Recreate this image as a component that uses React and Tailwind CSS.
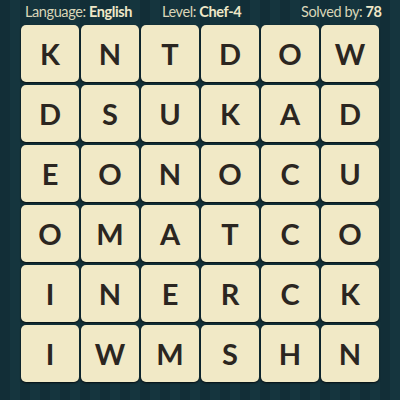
const rows = [
  "KNTDOW",
  "DSUKAD",
  "EONOCU",
  "OMATCO",
  "INERCK",
  "IWMSHN",
];

export default function App() {
  return (
    <div className="w-[400px] h-[400px] overflow-hidden bg-[#133039] bg-[repeating-linear-gradient(90deg,#122e37_0px,#122e37_10px,#15353e_10px,#15353e_20px)] font-['Lato','Open_Sans',sans-serif]">
      <div className="h-[25px] flex items-start pl-[25px] pt-[2px] text-[14.5px] leading-[20px] tracking-[-0.4px] text-[#d9d5b8]">
        <div className="w-[137px] shrink-0">
          Language: <span className="font-bold text-[#efe8c8]">English</span>
        </div>
        <div className="w-[139px] shrink-0">
          Level: <span className="font-bold text-[#efe8c8]">Chef-4</span>
        </div>
        <div className="shrink-0">
          Solved by: <span className="font-bold text-[#efe8c8]">78</span>
        </div>
      </div>
      <div className="ml-[21px] grid grid-cols-[repeat(6,58px)] auto-rows-[57px] gap-x-[2px] gap-y-[3px]">
        {rows.map((r, ri) =>
          r.split("").map((ch, ci) => (
            <div
              key={ri + "-" + ci}
              className="rounded-[5px] bg-[#f1e9c6] shadow-[0_1px_2px_rgba(0,0,0,0.7)] flex items-center justify-center text-[29px] font-bold text-[#2b2621]"
            >
              {ch}
            </div>
          ))
        )}
      </div>
    </div>
  );
}
